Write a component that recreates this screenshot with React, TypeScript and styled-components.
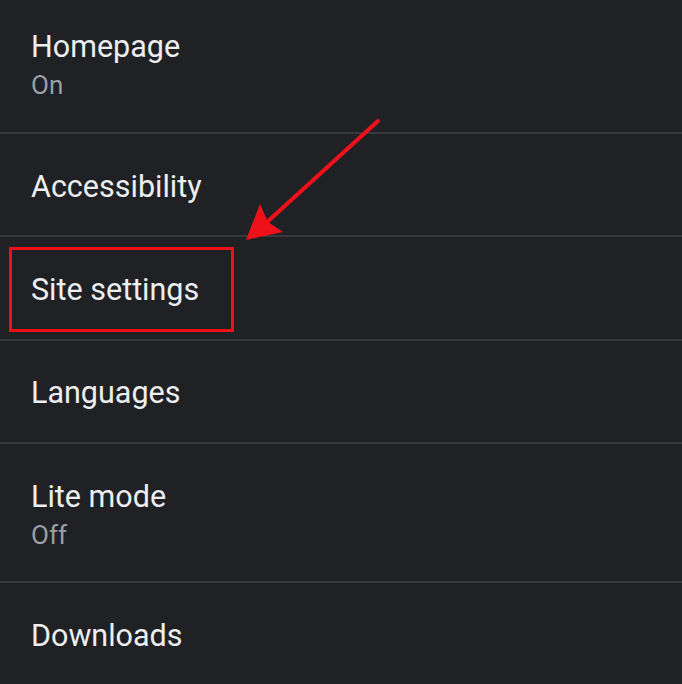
import styled, { createGlobalStyle } from 'styled-components'

const GlobalStyle = createGlobalStyle`
  html, body {
    margin: 0;
    padding: 0;
    background: #202124;
    overflow: hidden;
  }
  body {
    font-family: Roboto, "Liberation Sans", sans-serif;
  }
`

const Page = styled.div`
  position: relative;
  width: 682px;
  height: 684px;
  overflow: hidden;
  background: #202124;
`

const List = styled.div`
  display: flex;
  flex-direction: column;
  margin-top: -5.5px;
`

const Row = styled.div<{ $tall?: boolean }>`
  position: relative;
  display: flex;
  flex-direction: column;
  justify-content: center;
  box-sizing: border-box;
  height: ${p => (p.$tall ? '139.5px' : '103.3px')};
  flex-shrink: 0;
  padding: 4px 0 0 31px;
  border-bottom: 2px solid #38393c;
`

const Title = styled.div`
  font-size: 30.5px;
  line-height: 36px;
  color: #eceef0;
`

const Subtitle = styled.div`
  font-size: 26px;
  line-height: 32px;
  margin-top: 4px;
  color: #9aa0a6;
`

const Highlight = styled.div`
  position: absolute;
  left: 9px;
  top: 10px;
  width: 219px;
  height: 79px;
  border: 3px solid #f0101a;
  pointer-events: none;
`

const ArrowLayer = styled.svg`
  position: absolute;
  left: 0;
  top: 0;
  pointer-events: none;
`

interface ISetting {
  title: string
  value?: string
  marked?: boolean
}

const settings: ISetting[] = [
  { title: 'Homepage', value: 'On' },
  { title: 'Accessibility' },
  { title: 'Site settings', marked: true },
  { title: 'Languages' },
  { title: 'Lite mode', value: 'Off' },
  { title: 'Downloads' },
]

const App = () => {
  return (
    <Page>
      <GlobalStyle />
      <List>
        {settings.map(s => (
          <Row key={s.title} $tall={!!s.value}>
            <Title>{s.title}</Title>
            {s.value && <Subtitle>{s.value}</Subtitle>}
            {s.marked && <Highlight />}
          </Row>
        ))}
      </List>
      <ArrowLayer width="682" height="684" viewBox="0 0 682 684">
        <line x1="378" y1="121" x2="266" y2="223" stroke="#f0101a" strokeWidth="4" strokeLinecap="round" />
        <polygon points="246,240 260,204 268,222 283,232" fill="#f0101a" />
      </ArrowLayer>
    </Page>
  )
}

export default App
